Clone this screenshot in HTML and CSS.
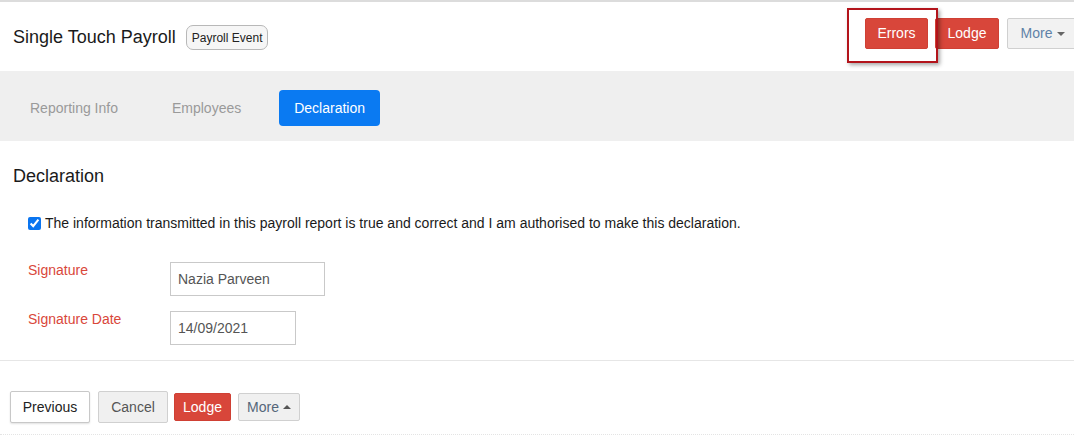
FILE: index.html
```html
<!DOCTYPE html>
<html>
<head>
<meta charset="utf-8">
<link rel="stylesheet" href="styles.css">
</head>
<body>
<div class="page">
  <header class="topbar">
    <div class="title-wrap">
      <h1 class="title">Single Touch Payroll</h1>
      <span class="badge">Payroll Event</span>
    </div>
    <div class="actions">
      <button class="btn btn-red btn-top btn-errors">Errors</button>
      <button class="btn btn-red btn-top btn-lodge">Lodge</button>
      <button class="btn btn-more btn-top">More <span class="caret-down"></span></button>
    </div>
    <div class="highlight"></div>
  </header>

  <nav class="tabs">
    <span class="tab">Reporting Info</span>
    <span class="tab">Employees</span>
    <span class="tab tab-active">Declaration</span>
  </nav>

  <section class="declaration">
    <h2 class="section-title">Declaration</h2>
    <label class="check-row">
      <input type="checkbox" checked class="check">
      <span>The information transmitted in this payroll report is true and correct and I am authorised to make this declaration.</span>
    </label>
    <div class="form-row">
      <span class="label">Signature</span>
      <div class="input input-wide">Nazia Parveen</div>
    </div>
    <div class="form-row">
      <span class="label">Signature Date</span>
      <div class="input input-date">14/09/2021</div>
    </div>
  </section>

  <footer class="footer">
    <button class="btn btn-white">Previous</button>
    <button class="btn btn-grey">Cancel</button>
    <button class="btn btn-red btn-small">Lodge</button>
    <button class="btn btn-grey btn-small btn-more-up">More <span class="caret-up"></span></button>
  </footer>
</div>
</body>
</html>
```

FILE: styles.css
```css
html, body {
  margin: 0;
  padding: 0;
  overflow: hidden;
  background: #fff;
}
body {
  font-family: "Liberation Sans", Arial, sans-serif;
  font-size: 14px;
  color: #222;
}
.page {
  width: 1074px;
  height: 438px;
  border-top: 2px solid #dcdcdc;
  box-sizing: border-box;
  position: relative;
}
.topbar {
  height: 69px;
  display: flex;
  align-items: center;
  justify-content: space-between;
  padding-left: 13px;
  position: relative;
}
.title-wrap {
  display: flex;
  align-items: center;
  gap: 10px;
  margin-top: 2px;
}
.title {
  margin: 0;
  font-size: 18px;
  font-weight: normal;
  color: #1a1a1a;
}
.badge {
  font-size: 12px;
  color: #222;
  background: #f6f6f6;
  border: 1px solid #b8b8b8;
  border-radius: 7px;
  padding: 5px 5px 4px;
  line-height: 14px;
}
.actions {
  display: flex;
  align-items: center;
  gap: 7px;
  margin-right: -6px;
  margin-top: -7px;
}
.btn {
  font-family: "Liberation Sans", Arial, sans-serif;
  font-size: 14px;
  border-radius: 2px;
  cursor: pointer;
  box-sizing: border-box;
  display: inline-flex;
  align-items: center;
  justify-content: center;
}
.btn-top {
  height: 31px;
  padding: 0;
}
.btn-errors { width: 63px; margin-left: 1px; }
.btn-lodge { width: 64px; }
.btn-red {
  background: #d8463a;
  border: 1px solid #cf4034;
  color: #fff;
}
.btn-more {
  background: #f2f2f2;
  border: 1px solid #d0d0d0;
  color: #5f82a8;
  padding: 0 13px 0 12px;
  width: 73px;
  margin-left: 1px;
}
.caret-down {
  display: inline-block;
  width: 0;
  height: 0;
  border-left: 4px solid transparent;
  border-right: 4px solid transparent;
  border-top: 4px solid #666;
  margin-left: 5px;
  margin-top: 1px;
}
.caret-up {
  display: inline-block;
  width: 0;
  height: 0;
  border-left: 4px solid transparent;
  border-right: 4px solid transparent;
  border-bottom: 4px solid #555;
  margin-left: 4px;
}
.highlight {
  position: absolute;
  left: 847px;
  top: 6px;
  width: 91px;
  height: 55px;
  border: 2px solid #b3141b;
  box-sizing: border-box;
  box-shadow: 2px 2px 4px rgba(0,0,0,0.35);
  pointer-events: none;
}
.tabs {
  height: 70px;
  background: #efefef;
  display: flex;
  align-items: center;
  gap: 22px;
  padding-left: 14px;
  box-sizing: border-box;
}
.tab {
  padding: 0 16px;
  color: #9a9a9a;
  line-height: 36px;
  height: 36px;
  margin-top: 4px;
}
.tab-active {
  background: #0a7af2;
  color: #fff;
  border-radius: 4px;
  padding: 0 15px 0 15px;
}
.declaration {
  padding: 25px 0 0;
  border-bottom: 1px solid #e6e6e6;
  height: 220px;
  box-sizing: border-box;
}
.section-title {
  margin: 0 0 0 13px;
  font-size: 18px;
  font-weight: normal;
  line-height: 20px;
  color: #1a1a1a;
}
.check-row {
  display: flex;
  align-items: center;
  margin: 29px 0 0 27px;
  color: #1a1a1a;
}
.check {
  margin: 0 4px 0 1px;
  width: 13px;
  height: 13px;
  accent-color: #0a75f0;
}
.form-row {
  display: flex;
  align-items: flex-start;
  margin: 15px 0 0 28px;
}
.form-row + .form-row {
  margin-top: 15px;
}
.check-row + .form-row {
  margin-top: 31px;
}
.label {
  width: 142px;
  color: #d9473b;
  line-height: 16px;
}
.input {
  height: 34px;
  border: 1px solid #c9c9c9;
  box-sizing: border-box;
  padding: 0 7px;
  display: flex;
  align-items: center;
  color: #555;
}
.input-wide { width: 155px; }
.input-date { width: 126px; }
.footer {
  display: flex;
  align-items: center;
  padding: 19px 0 0 10px;
  height: 74px;
  box-sizing: border-box;
  border-bottom: 1px dotted #e4e4e4;
}
.btn-white {
  height: 32px;
  width: 80px;
  background: #fff;
  border: 1px solid #c8c8c8;
  color: #222;
  box-shadow: 0 1px 2px rgba(0,0,0,0.12);
  margin-right: 8px;
}
.btn-grey {
  height: 32px;
  width: 70px;
  background: #f0f0f0;
  border: 1px solid #d0d0d0;
  color: #555;
  margin-right: 6px;
}
.btn-small {
  height: 28px;
  width: 57px;
  margin-right: 7px;
}
.btn-more-up {
  width: 62px;
  color: #55667a;
  margin-right: 0;
}
```
